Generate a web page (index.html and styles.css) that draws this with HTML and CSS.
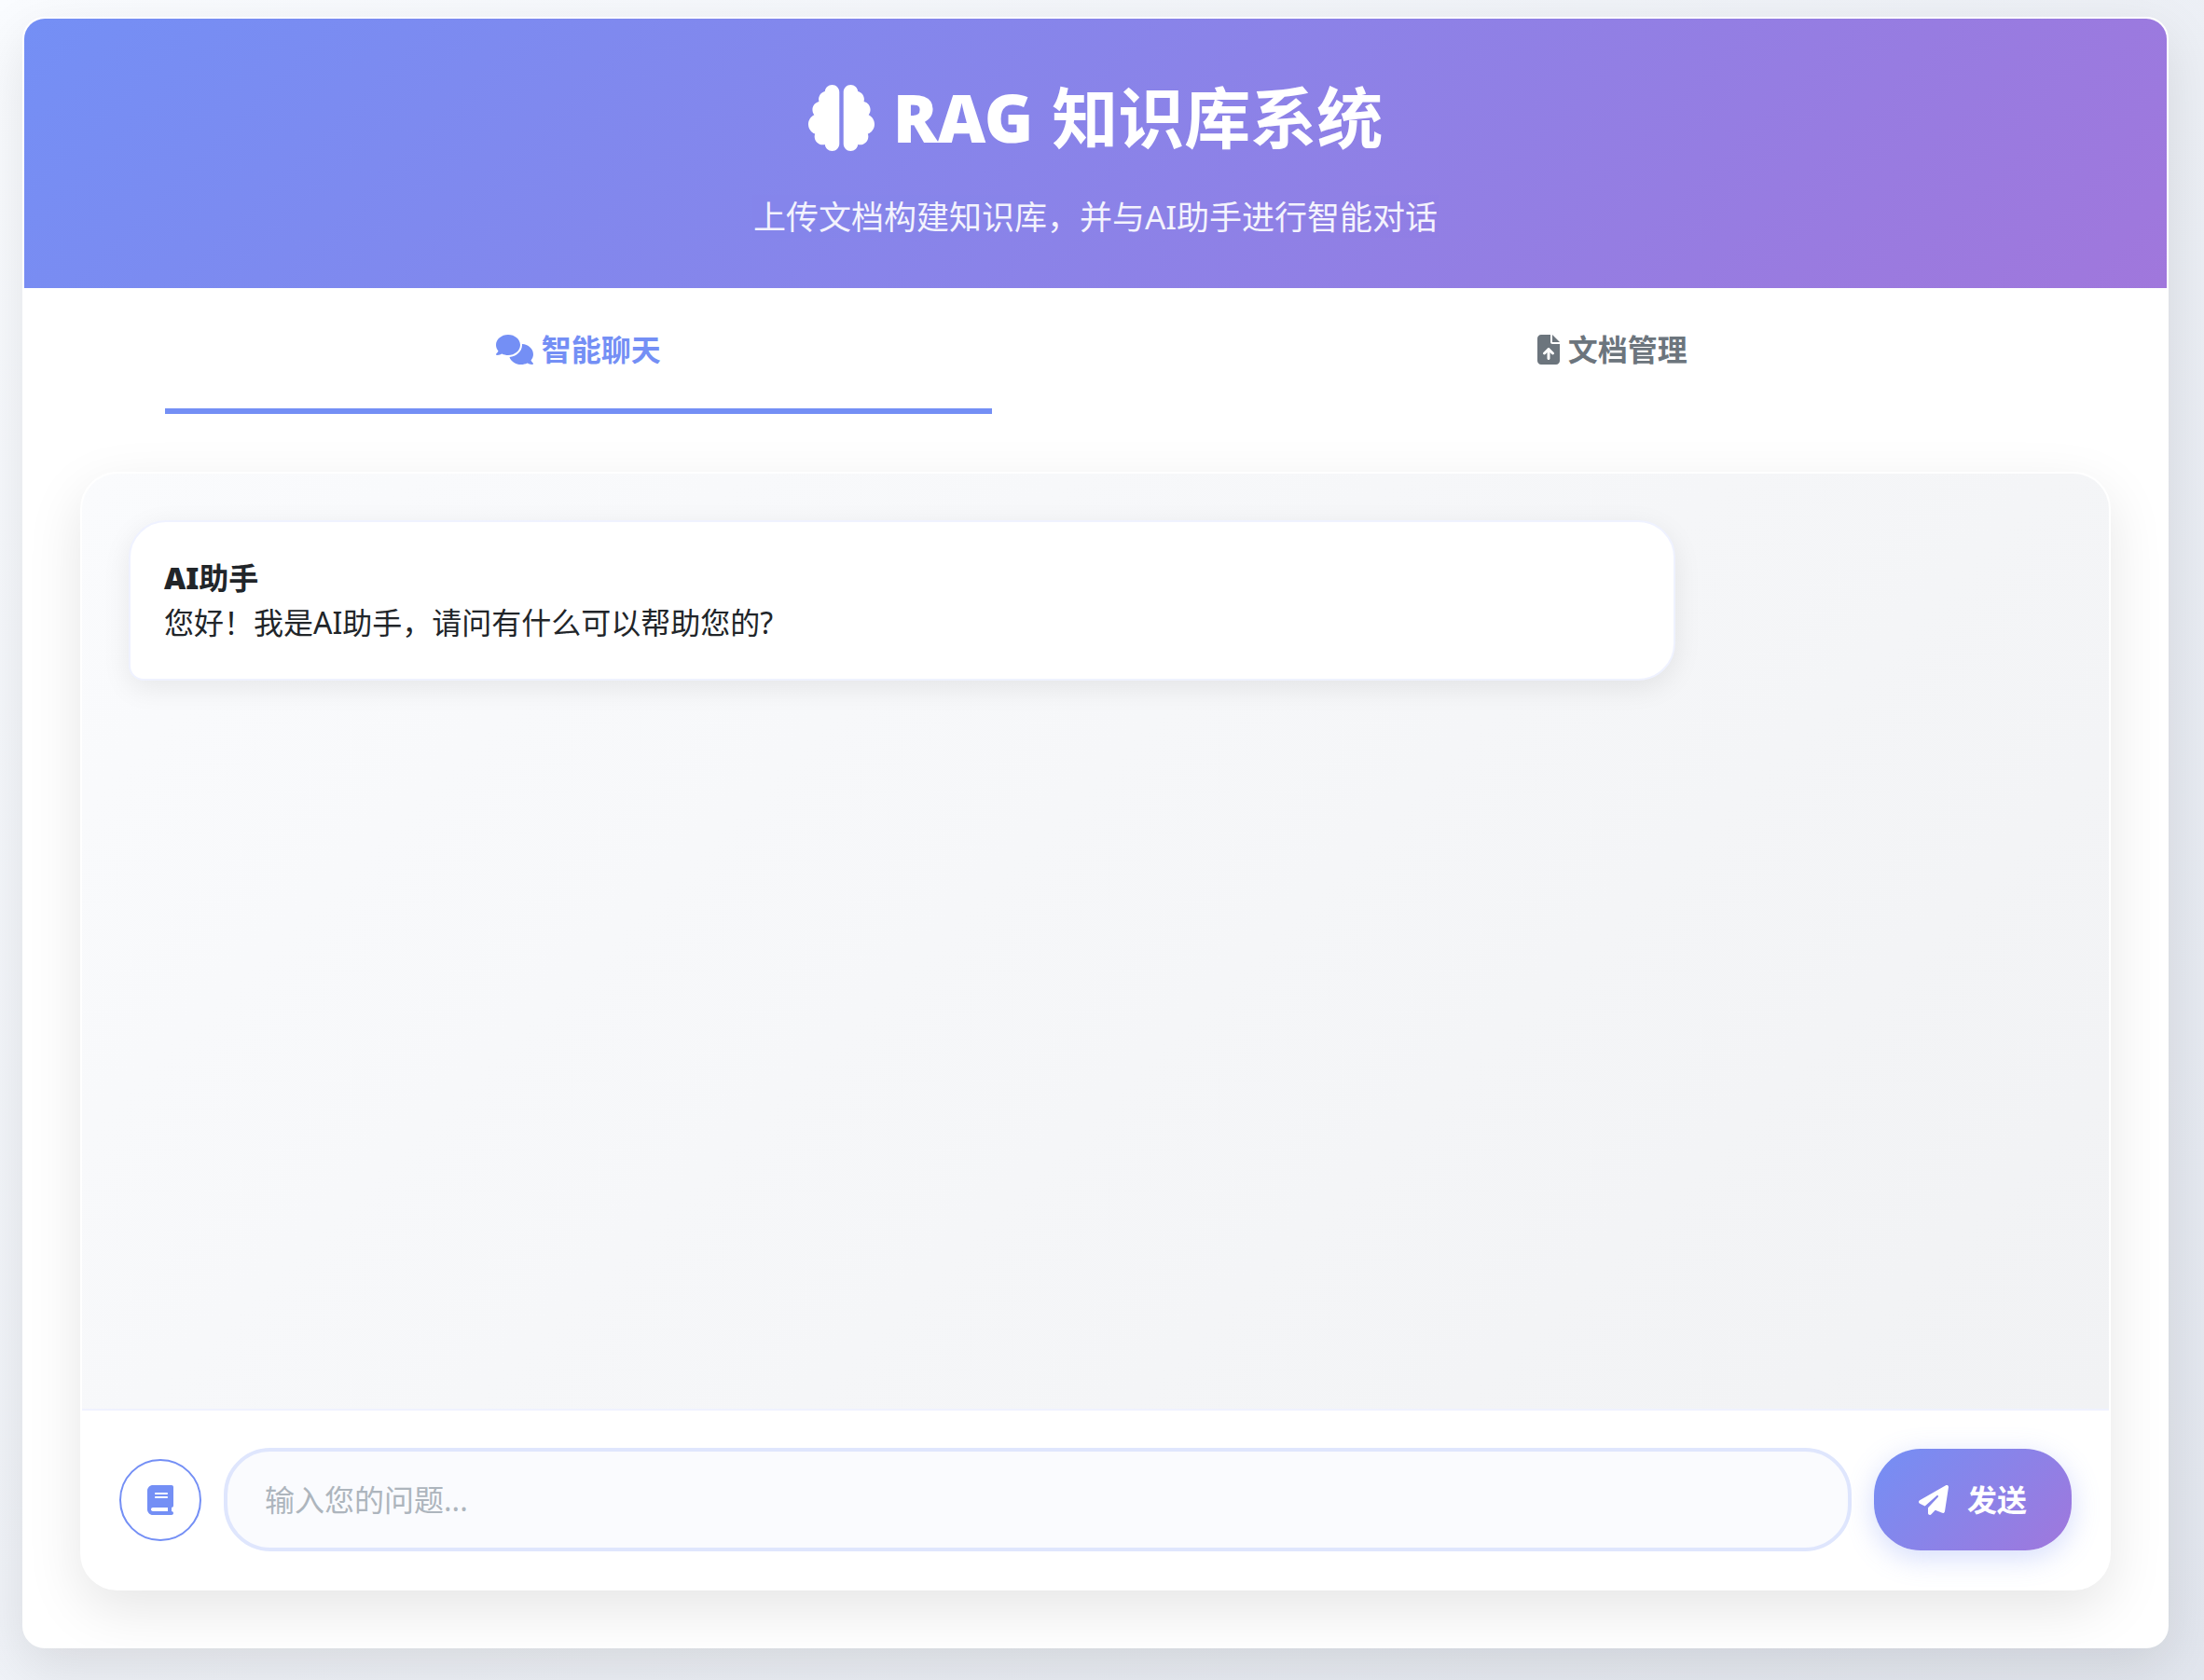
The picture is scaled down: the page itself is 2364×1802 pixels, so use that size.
FILE: index.html
```html
<!DOCTYPE html>
<html lang="zh-CN">
<head>
<meta charset="utf-8">
<title>RAG 知识库系统</title>
<link rel="stylesheet" href="styles.css">
</head>
<body>
<main class="container">
  <header class="header">
    <h1 class="title"><svg class="icon" viewBox="0 0 512 512" aria-hidden="true"><path d="M184 0c30.900 0 56 25.100 56 56V456c0 30.900-25.100 56-56 56c-28.900 0-52.700-21.900-55.700-50.100c-5.200 1.400-10.700 2.100-16.300 2.100c-35.300 0-64-28.700-64-64c0-7.400 1.300-14.600 3.600-21.200C21.400 367.400 0 338.200 0 304c0-31.900 18.700-59.500 45.800-72.300C37.100 220.800 32 207 32 192c0-30.700 21.600-56.300 50.400-62.600C80.800 123.900 80 118 80 112c0-29.900 20.600-55.100 48.300-62.100C131.300 21.900 155.100 0 184 0zM328 0c28.900 0 52.600 21.900 55.700 49.900c27.800 7 48.300 32.100 48.300 62.100c0 6-.8 11.900-2.400 17.400c28.800 6.200 50.400 31.900 50.400 62.600c0 15-5.100 28.800-13.800 39.700C493.300 244.500 512 272.100 512 304c0 34.200-21.400 63.400-51.600 74.800c2.300 6.600 3.600 13.800 3.600 21.200c0 35.300-28.700 64-64 64c-5.600 0-11.100-.7-16.300-2.100c-3 28.200-26.800 50.100-55.700 50.100c-30.900 0-56-25.100-56-56V56c0-30.900 25.100-56 56-56z"/></svg> <span class="latin">RAG</span> <span>知识库系统</span></h1>
    <p class="subtitle">上传文档构建知识库，并与AI助手进行智能对话</p>
  </header>
  <nav class="tabs">
    <button class="tab active" type="button"><svg class="icon wide" viewBox="0 0 640 512" aria-hidden="true"><path d="M208 352c114.900 0 208-78.800 208-176S322.900 0 208 0S0 78.800 0 176c0 38.600 14.700 74.300 39.600 103.400c-3.500 9.400-8.700 17.700-14.200 24.700c-4.800 6.200-9.700 11-13.300 14.300c-1.800 1.600-3.300 2.900-4.300 3.700c-.5 .4-.9 .7-1.100 .8l-.2 .2C1 327.200-1.400 334.400 .8 340.900S9.100 352 16 352c21.800 0 43.800-5.600 62.100-12.500c9.200-3.500 17.800-7.400 25.200-11.400C134.100 343.300 169.800 352 208 352zM448 176c0 112.300-99.100 196.900-216.500 207C255.800 457.400 336.400 512 432 512c38.200 0 73.900-8.700 104.700-23.900c7.500 4 16 7.900 25.200 11.400c18.300 6.900 40.300 12.500 62.100 12.500c6.900 0 13.100-4.500 15.200-11.100c2.100-6.600-.2-13.800-5.800-17.900l-.2-.2c-.2-.2-.6-.4-1.100-.8c-1-.8-2.500-2-4.300-3.700c-3.600-3.300-8.500-8.100-13.300-14.300c-5.500-7-10.700-15.400-14.200-24.700c24.900-29 39.600-64.700 39.600-103.400c0-92.800-84.900-168.900-192.600-175.500c.4 5.100 .6 10.300 .6 15.500z"/></svg> 智能聊天</button>
    <button class="tab" type="button"><svg class="icon narrow" viewBox="0 0 384 512" aria-hidden="true"><path d="M64 0C28.700 0 0 28.700 0 64V448c0 35.300 28.700 64 64 64H320c35.300 0 64-28.700 64-64V160H256c-17.700 0-32-14.300-32-32V0H64zM256 0V128H384L256 0zM216 408c0 13.300-10.700 24-24 24s-24-10.700-24-24V305.900l-31 31c-9.400 9.400-24.600 9.400-33.900 0s-9.400-24.600 0-33.900l72-72c9.400-9.400 24.600-9.400 33.900 0l72 72c9.400 9.400 9.400 24.600 0 33.900s-24.600 9.400-33.900 0l-31-31V408z"/></svg> 文档管理</button>
  </nav>
  <section class="content">
    <div class="chat">
      <div class="messages">
        <article class="message"><strong><span class="latin">AI</span>助手</strong><br>您好！我是AI助手，请问有什么可以帮助您的?</article>
      </div>
      <form class="composer">
        <button class="kb" type="button" aria-label="知识库"><svg class="icon narrow" viewBox="0 0 448 512" aria-hidden="true"><path d="M96 0C43 0 0 43 0 96V416c0 53 43 96 96 96H384h32c17.700 0 32-14.300 32-32s-14.300-32-32-32V384c17.700 0 32-14.300 32-32V32c0-17.700-14.300-32-32-32H384 96zm0 384H352v64H96c-17.700 0-32-14.300-32-32s14.300-32 32-32zm32-240c0-8.800 7.200-16 16-16H336c8.800 0 16 7.200 16 16s-7.200 16-16 16H144c-8.800 0-16-7.200-16-16zm16 48H336c8.800 0 16 7.200 16 16s-7.200 16-16 16H144c-8.800 0-16-7.200-16-16s7.200-16 16-16z"/></svg></button>
        <input class="question" type="text" placeholder="输入您的问题..." aria-label="输入您的问题">
        <button class="send" type="button"><svg class="icon" viewBox="0 0 512 512" aria-hidden="true"><path d="M498.100 5.600c10.100 7 15.400 19.100 13.500 31.200l-64 416c-1.500 9.700-7.400 18.200-16 23s-18.900 5.400-28 1.600L284 427.700l-68.500 74.100c-8.900 9.700-22.900 12.900-35.200 8.100S160 493.200 160 480V396.400c0-4 1.500-7.800 4.200-10.700L331.800 202.800c5.800-6.300 5.600-16-.4-22s-15.700-6.400-22-.7L106 360.800 17.700 316.600C7.100 311.300 .3 300.700 0 288.900s5.900-22.800 16.100-28.700l448-256c10.700-6.100 23.900-5.500 34 1.400z"/></svg>发送</button>
      </form>
    </div>
  </section>
</main>
</body>
</html>
```
FILE: styles.css
```css
* { box-sizing: border-box; }

:root {
  --primary: #748ff5;
  --gradient: linear-gradient(135deg, #748ff5 0%, #a077dc 100%);
}

body {
  margin: 0;
  min-height: 100vh;
  padding: 18px 38px 34px 24px;
  background: linear-gradient(135deg, #fafcff 0%, #e2e6ee 100%);
  color: #212529;
  font: 32px/48px "Noto Sans", "Noto Sans CJK SC", sans-serif;
}

button, input { font: inherit; }

.latin { font-weight: 900; }

.icon {
  width: 1em;
  height: 1em;
  fill: currentColor;
  vertical-align: -0.125em;
}
.icon.wide { width: 40px; }
.icon.narrow { width: 28px; }
.tab .icon.narrow { width: 24px; }

.container {
  overflow: hidden;
  border: 2px solid #fff;
  border-radius: 24px;
  background: #fff;
  box-shadow: 0 20px 60px rgba(0, 0, 0, .1);
}

.header {
  padding: 58px 40px 50px;
  background: var(--gradient);
  color: #fff;
  text-align: center;
}
.title {
  display: flex;
  justify-content: center;
  align-items: center;
  gap: 20px;
  height: 96px;
  margin: 0 0 32px;
  font-size: 71px;
  line-height: 96px;
  font-weight: 700;
}
.subtitle {
  margin: 0;
  height: 53px;
  font-size: 35px;
  line-height: 53px;
  opacity: .9;
}

.tabs {
  display: flex;
  padding: 0 40px;
}
.tab {
  position: relative;
  flex: 1;
  height: 137px;
  padding: 0 40px 6px;
  border: 0;
  background: none;
  color: #6c757d;
  font-weight: 700;
}
.tab.active { color: var(--primary); }
.tab.active::after {
  content: "";
  position: absolute;
  bottom: 2px;
  left: 10%;
  width: 80%;
  height: 6px;
  background: var(--primary);
}

.content { padding: 60px; }

.chat {
  display: flex;
  flex-direction: column;
  min-height: 1200px;
  overflow: hidden;
  border: 2px solid #fff;
  border-radius: 40px;
  background: #fff;
  box-shadow: 0 20px 60px rgba(0, 0, 0, .1);
}
.messages {
  flex: 1;
  padding: 50px;
  background: linear-gradient(135deg, #fafbfd 0%, #f1f2f4 100%);
}
.message {
  width: 80%;
  padding: 36px;
  border: 2px solid #eff2ff;
  border-radius: 40px 40px 40px 16px;
  background: #fff;
  box-shadow: 0 8px 30px rgba(0, 0, 0, .08);
}

.composer {
  display: flex;
  align-items: center;
  gap: 24px;
  padding: 40px;
  border-top: 2px solid #eff2ff;
}
.kb {
  width: 88px;
  height: 88px;
  padding: 0;
  border: 2px solid var(--primary);
  border-radius: 50%;
  background: #fff;
  color: var(--primary);
}
.question {
  flex: 1;
  min-width: 0;
  height: 111px;
  padding: 0 40px;
  border: 4px solid #dfe6fd;
  border-radius: 50px;
  background: #fafbfe;
  color: #212529;
}
.question::placeholder { color: #adb5bd; opacity: 1; }
.send {
  display: flex;
  align-items: center;
  gap: 20px;
  height: 109px;
  padding: 0 48px;
  border: 0;
  border-radius: 50px;
  background: var(--gradient);
  color: #fff;
  font-weight: 700;
  box-shadow: 0 8px 30px rgba(116, 143, 245, .3);
}
```
